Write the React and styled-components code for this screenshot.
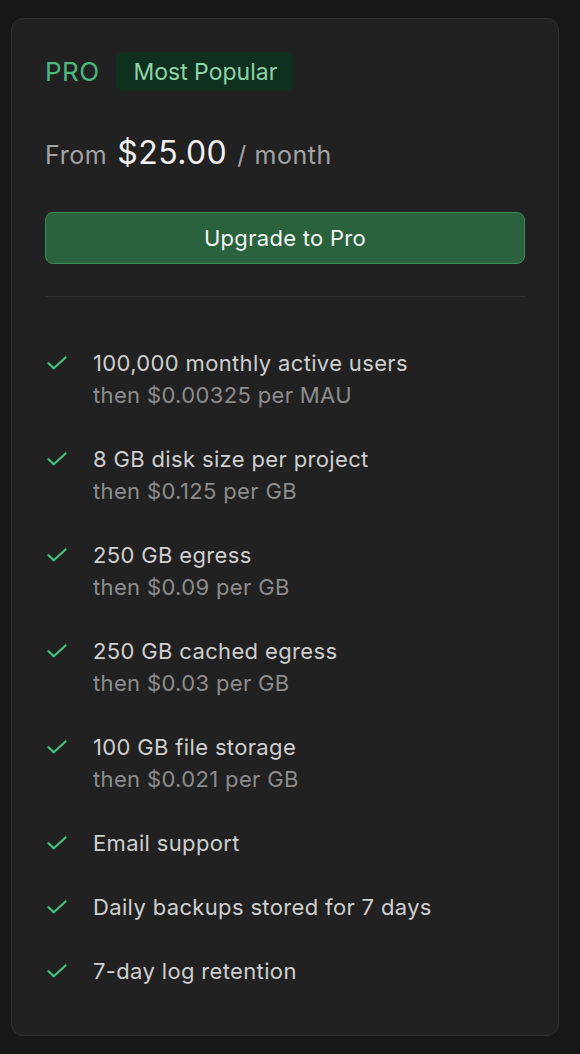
import * as React from 'react';
import styled, { createGlobalStyle } from 'styled-components';

const GlobalStyle = createGlobalStyle`
  html, body {
    margin: 0;
    padding: 0;
    background: #171717;
  }
  body {
    font-family: "Inter", "Liberation Sans", sans-serif;
    -webkit-font-smoothing: antialiased;
  }
`;

const Page = styled.div`
  padding: 18px 21px 20px 11px;
`;

const Card = styled.div`
  background: #212121;
  border: 1px solid #303030;
  border-radius: 12px;
  padding: 33px 33px 48px 33px;
  display: flex;
  flex-direction: column;
`;

const Header = styled.div`
  display: flex;
  align-items: center;
  gap: 17px;
  height: 39px;
`;

const Tier = styled.span`
  font-size: 26px;
  letter-spacing: 0.4px;
  color: #4cb87d;
`;

const Badge = styled.span`
  background: #10301f;
  color: #8ed3a8;
  font-size: 23px;
  height: 39px;
  padding: 0 17px;
  border-radius: 7px;
  display: flex;
  align-items: center;
`;

const Price = styled.div`
  margin-top: 42px;
  height: 46px;
  display: flex;
  align-items: baseline;
  gap: 10px;
  color: #a3a3a3;
  font-size: 25px;
  letter-spacing: 0.6px;
`;

const Amount = styled.span`
  color: #f2f2f2;
  font-size: 32px;
  letter-spacing: 0.4px;
`;

const Button = styled.button`
  margin-top: 33px;
  height: 52px;
  width: 100%;
  background: #2a623e;
  border: 1px solid #3b8a55;
  border-radius: 8px;
  color: #f4f4f4;
  font-family: inherit;
  font-size: 22px;
  letter-spacing: 0.3px;
`;

const Divider = styled.hr`
  margin: 32px 0 0 0;
  border: none;
  height: 1px;
  background: #2f2f2f;
`;

const List = styled.ul`
  list-style: none;
  margin: 50px 0 0 0;
  padding: 0;
  display: flex;
  flex-direction: column;
  gap: 32px;
`;

const Item = styled.li`
  display: flex;
  align-items: flex-start;
  gap: 24px;
  font-size: 22px;
  letter-spacing: 0.35px;
  line-height: 32px;
`;

const CheckWrap = styled.span`
  width: 22px;
  height: 32px;
  display: flex;
  align-items: center;
  padding-left: 2px;
  flex-shrink: 0;
`;

const Lines = styled.div`
  display: flex;
  flex-direction: column;
`;

const Main = styled.span`
  color: #cfcfcf;
`;

const Sub = styled.span`
  color: #8c8c8c;
`;

const Check = () => (
  <svg width="20" height="14" viewBox="0 0 20 14" fill="none">
    <path d="M1.5 7.2 L6.8 12.3 L18.5 1.5" stroke="#45c382" strokeWidth="2.2" strokeLinecap="round" strokeLinejoin="round" />
  </svg>
);

const features = [
  ['100,000 monthly active users', 'then $0.00325 per MAU'],
  ['8 GB disk size per project', 'then $0.125 per GB'],
  ['250 GB egress', 'then $0.09 per GB'],
  ['250 GB cached egress', 'then $0.03 per GB'],
  ['100 GB file storage', 'then $0.021 per GB'],
  ['Email support'],
  ['Daily backups stored for 7 days'],
  ['7-day log retention'],
];

export default function App() {
  return (
    <>
      <GlobalStyle />
      <Page>
        <Card>
          <Header>
            <Tier>PRO</Tier>
            <Badge>Most Popular</Badge>
          </Header>
          <Price>
            <span>From</span>
            <Amount>$25.00</Amount>
            <span>/ month</span>
          </Price>
          <Button>Upgrade to Pro</Button>
          <Divider />
          <List>
            {features.map(([main, sub]) => (
              <Item key={main}>
                <CheckWrap><Check /></CheckWrap>
                <Lines>
                  <Main>{main}</Main>
                  {sub && <Sub>{sub}</Sub>}
                </Lines>
              </Item>
            ))}
          </List>
        </Card>
      </Page>
    </>
  );
}
